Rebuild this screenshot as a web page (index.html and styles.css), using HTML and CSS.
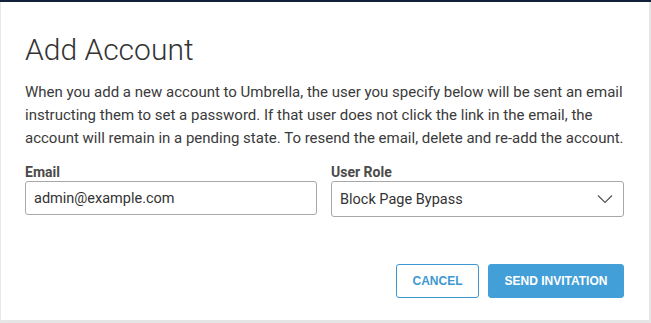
FILE: index.html
```html
<!DOCTYPE html>
<html lang="en">
<head>
    <meta charset="UTF-8">
    <title>Add Account</title>
    <link rel="stylesheet" href="styles.css">
</head>
<body>
    <div class="modal">
        <h1 class="modal-title">Add Account</h1>
        <p class="modal-text">When you add a new account to Umbrella, the user you specify below will be sent an email instructing them to set a password. If that user does not click the link in the email, the account will remain in a pending state. To resend the email, delete and re-add the account.</p>
        <div class="form-row">
            <div class="field">
                <label class="field-label">Email</label>
                <div class="input">admin@example.com</div>
            </div>
            <div class="field">
                <label class="field-label">User Role</label>
                <div class="input select">
                    <span>Block Page Bypass</span>
                    <svg width="16" height="10" viewBox="0 0 16 10">
                        <polyline points="1,1.5 8,8.5 15,1.5" fill="none" stroke="#555" stroke-width="1.2"/>
                    </svg>
                </div>
            </div>
        </div>
        <div class="actions">
            <button class="btn btn-cancel">CANCEL</button>
            <button class="btn btn-send">SEND INVITATION</button>
        </div>
    </div>
</body>
</html>
```

FILE: styles.css
```css
html, body {
    margin: 0;
    height: 100%;
}
body {
    background-color: #e6e6e6;
    border-top: 2px solid #12213a;
    font-family: 'Roboto', sans-serif;
    box-sizing: border-box;
}
.modal {
    background-color: white;
    width: 649px;
    height: 319px;
    box-sizing: border-box;
    border-left: 1px solid #e8e8e8;
    border-bottom: 1px solid #e4e4e4;
    padding: 0 25px 0 24px;
}
.modal-title {
    font-size: 30px;
    font-weight: 300;
    color: #333;
    margin: 0;
    padding-top: 32px;
    line-height: 32px;
}
.modal-text {
    font-size: 15px;
    line-height: 23px;
    color: #3a3a3a;
    margin: 15px 0 0 0;
}
.form-row {
    display: flex;
    gap: 14px;
    margin-top: 13px;
}
.field {
    display: flex;
    flex-direction: column;
}
.field:first-child {
    width: 293px;
}
.field:last-child {
    width: 294px;
}
.field-label {
    font-size: 14px;
    font-weight: bold;
    color: #4a4a4a;
    line-height: 18px;
    margin-bottom: 0;
}
.input {
    border: 1px solid #a8a8a8;
    border-radius: 3px;
    height: 34px;
    box-sizing: border-box;
    padding: 0 8px;
    font-size: 14.5px;
    color: #333;
    display: flex;
    align-items: center;
}
.select {
    justify-content: space-between;
    height: 36px;
    padding-right: 10px;
}
.actions {
    display: flex;
    justify-content: flex-end;
    gap: 9px;
    margin-top: 47px;
}
.btn {
    font-family: 'Liberation Sans', sans-serif;
    font-size: 12px;
    font-weight: bold;
    height: 34px;
    border-radius: 3px;
    cursor: pointer;
}
.btn-cancel {
    background: white;
    border: 1px solid #3d98d1;
    color: #3d98d1;
    width: 83px;
}
.btn-send {
    background: #439fd7;
    border: 1px solid #439fd7;
    color: white;
    width: 136px;
}
```
